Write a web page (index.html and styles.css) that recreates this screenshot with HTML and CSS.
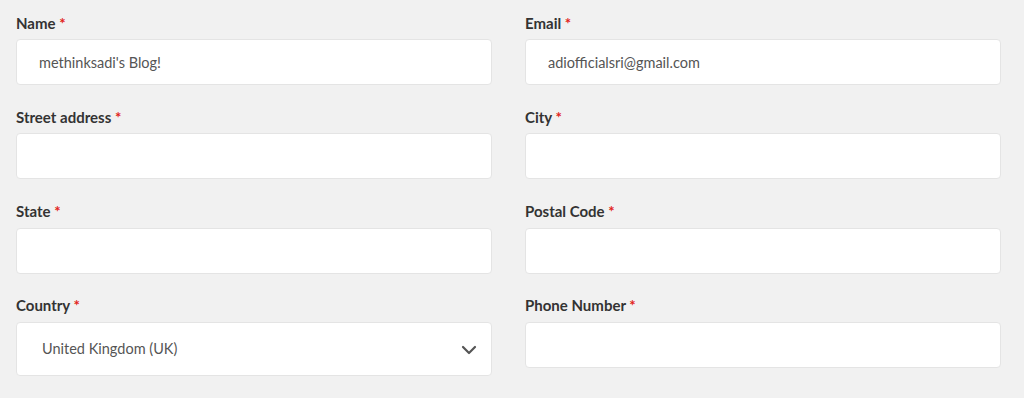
FILE: index.html
```html
<!DOCTYPE html>
<html lang="en">
  <head>
    <meta charset="UTF-8" />
    <meta name="viewport" content="width=device-width, initial-scale=1.0" />
    <title>Billing Details</title>
    <link rel="stylesheet" href="styles.css">
  </head>
  <body>
    <form class="billing-form">
      <div class="field">
        <label class="field-label">Name <span class="required">*</span></label>
        <input class="field-input" type="text" value="methinksadi's Blog!" />
      </div>
      <div class="field">
        <label class="field-label">Email <span class="required">*</span></label>
        <input class="field-input" type="email" value="adiofficialsri@gmail.com" />
      </div>
      <div class="field">
        <label class="field-label">Street address <span class="required">*</span></label>
        <input class="field-input" type="text" />
      </div>
      <div class="field">
        <label class="field-label">City <span class="required">*</span></label>
        <input class="field-input" type="text" />
      </div>
      <div class="field">
        <label class="field-label">State <span class="required">*</span></label>
        <input class="field-input" type="text" />
      </div>
      <div class="field">
        <label class="field-label">Postal Code <span class="required">*</span></label>
        <input class="field-input" type="text" />
      </div>
      <div class="field">
        <label class="field-label">Country <span class="required">*</span></label>
        <div class="select-box">
          <span class="select-value">United Kingdom (UK)</span>
          <svg class="select-arrow" width="16" height="10" viewBox="0 0 16 10">
            <path d="M2 2 L8 8 L14 2" fill="none" stroke="#555" stroke-width="2.2" stroke-linecap="round" stroke-linejoin="round" />
          </svg>
        </div>
      </div>
      <div class="field">
        <label class="field-label">Phone Number <span class="required">*</span></label>
        <input class="field-input" type="tel" />
      </div>
    </form>
  </body>
</html>
```

FILE: styles.css
```css
* {
  margin: 0;
  padding: 0;
  box-sizing: border-box;
}

body {
  font-family: Lato, "Open Sans", Arial, sans-serif;
  background-color: #f1f1f1;
  color: #333;
}

.billing-form {
  display: grid;
  grid-template-columns: 476px 476px;
  column-gap: 33px;
  row-gap: 21.8px;
  align-items: start;
  padding: 12.5px 23px 0 16px;
}

.field {
  display: flex;
  flex-direction: column;
}

.field-label {
  font-size: 15px;
  font-weight: 700;
  line-height: 20px;
  margin-bottom: 6.5px;
  color: #333;
}

.required {
  color: #e2231a;
}

.field-input {
  height: 46px;
  width: 100%;
  background-color: #fff;
  border: 1px solid #e4e4e4;
  border-radius: 4px;
  padding: 0 22px;
  font-family: inherit;
  font-size: 14.5px;
  color: #555;
  outline: none;
}

.select-box {
  height: 54px;
  background-color: #fff;
  border: 1px solid #e4e4e4;
  border-radius: 4px;
  display: flex;
  align-items: center;
  justify-content: space-between;
  padding: 0 14px 0 25px;
  font-size: 14.5px;
  color: #555;
}

.select-arrow {
  display: block;
  margin-top: 2px;
}
```
